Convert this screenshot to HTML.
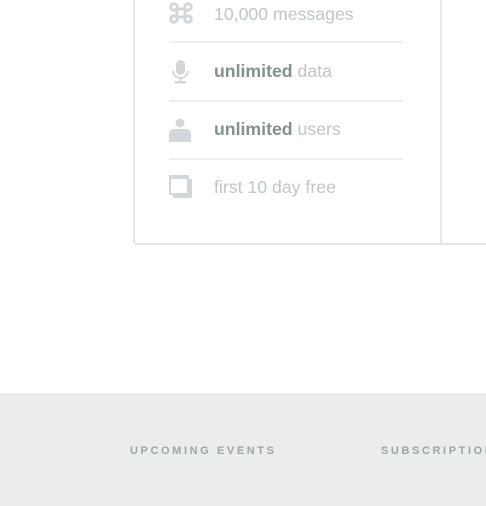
<!DOCTYPE html>
<html><head><style>
body{margin:0;width:486px;height:506px;position:relative;overflow:hidden;background:#fff;font-family:"Liberation Sans",sans-serif}
.card{position:absolute;left:133px;top:-10px;width:400px;height:253px;border:2px solid #e3e5e6;border-top:none;border-radius:0 0 4px 4px;box-sizing:content-box}
.div{position:absolute;left:440px;top:0;width:2px;height:244px;background:#e3e5e6}
.line{position:absolute;left:169px;width:234px;height:2px;background:#eceef0}
.t{position:absolute;left:214px;font-size:17.7px;color:#c0c5c8;line-height:20px}
.t b{color:#84908f;font-weight:bold}
.ic{position:absolute;left:169px}
.foot{position:absolute;left:0;top:393px;width:486px;height:113px;background:#ebecee}
.h{position:absolute;top:445px;font-size:11px;font-weight:bold;letter-spacing:2.6px;color:#9aa6a5}
</style></head><body>
<div class="card"></div>
<div class="div"></div>
<svg class="ic" style="top:2px" width="24" height="22" viewBox="0 0 24 22"><g fill="none" stroke="#d3d7da" stroke-width="3"><path d="M8 7H16V15H8Z"/><circle cx="5" cy="5" r="3.3"/><circle cx="19" cy="5" r="3.3"/><circle cx="5" cy="17" r="3.3"/><circle cx="19" cy="17" r="3.3"/></g></svg>
<div class="t" style="top:4px">10,000 messages</div>
<div class="line" style="top:41px"></div>
<svg class="ic" style="top:60px" width="24" height="24" viewBox="0 0 24 24"><rect x="7" y="0" width="9" height="15" rx="4.5" fill="#d3d7da"/><path d="M4 11a7.5 7 0 0 0 15 0" fill="none" stroke="#d3d7da" stroke-width="2"/><rect x="10.5" y="17" width="2" height="4" fill="#d3d7da"/><rect x="6" y="21" width="11" height="2.5" fill="#d3d7da"/></svg>
<div class="t" style="top:61px"><b>unlimited</b> data</div>
<div class="line" style="top:100px"></div>
<svg class="ic" style="top:118px" width="24" height="24" viewBox="0 0 24 24"><circle cx="11" cy="5" r="4.5" fill="#d3d7da"/><path d="M0 24V17Q0 11 6 11H16Q22 11 22 17V24Z" fill="#d3d7da"/></svg>
<div class="t" style="top:119px"><b>unlimited</b> users</div>
<div class="line" style="top:158px"></div>
<svg class="ic" style="top:175px" width="26" height="24" viewBox="0 0 26 24"><path d="M4 4H23V23H4Z" fill="#d3d7da"/><rect x="1" y="1" width="18" height="18" fill="#fff" stroke="#d3d7da" stroke-width="2"/><rect x="1" y="1" width="18" height="3" fill="#d3d7da"/></svg>
<div class="t" style="top:177px">first 10 day free</div>
<div class="foot"></div>
<div class="h" style="left:130px">UPCOMING EVENTS</div>
<div class="h" style="left:381px">SUBSCRIPTIONS</div>
</body></html>
